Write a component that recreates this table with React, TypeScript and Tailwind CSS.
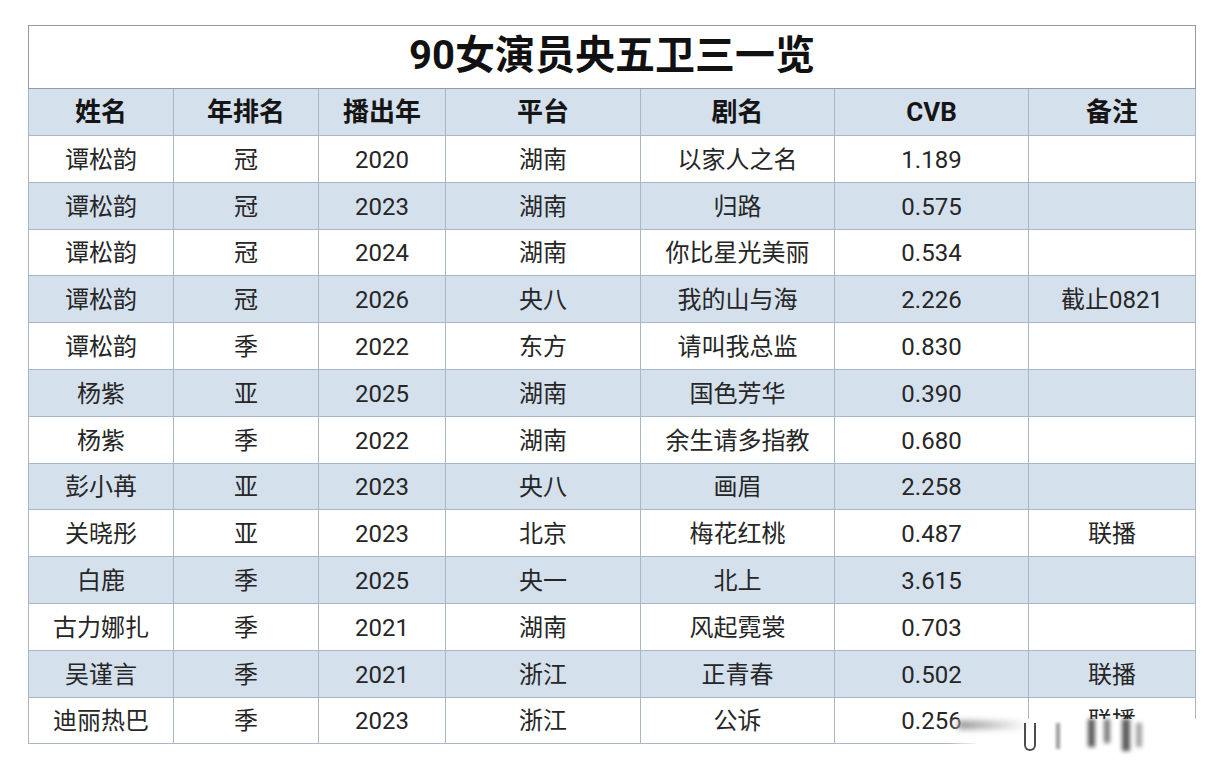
import React from "react"

type Row = [string, string, string, string, string, string, string]

const rows: Row[] = [
    ["谭松韵", "冠", "2020", "湖南", "以家人之名", "1.189", ""],
    ["谭松韵", "冠", "2023", "湖南", "归路", "0.575", ""],
    ["谭松韵", "冠", "2024", "湖南", "你比星光美丽", "0.534", ""],
    ["谭松韵", "冠", "2026", "央八", "我的山与海", "2.226", "截止0821"],
    ["谭松韵", "季", "2022", "东方", "请叫我总监", "0.830", ""],
    ["杨紫", "亚", "2025", "湖南", "国色芳华", "0.390", ""],
    ["杨紫", "季", "2022", "湖南", "余生请多指教", "0.680", ""],
    ["彭小苒", "亚", "2023", "央八", "画眉", "2.258", ""],
    ["关晓彤", "亚", "2023", "北京", "梅花红桃", "0.487", "联播"],
    ["白鹿", "季", "2025", "央一", "北上", "3.615", ""],
    ["古力娜扎", "季", "2021", "湖南", "风起霓裳", "0.703", ""],
    ["吴谨言", "季", "2021", "浙江", "正青春", "0.502", "联播"],
    ["迪丽热巴", "季", "2023", "浙江", "公诉", "0.256", "联播"],
]

const headers = ["姓名", "年排名", "播出年", "平台", "剧名", "CVB", "备注"]
const widths = ["w-[145px]", "w-[145px]", "w-[127px]", "w-[195px]", "w-[194px]", "w-[194px]", "w-[167px]"]

const App = (): React.ReactElement => {
    return (
        <div className="relative w-[1224px] h-[774px] bg-white pt-[25px] pl-[28px] font-['Roboto','Noto_Sans_CJK_SC',sans-serif]">
            <table className="w-[1167px] table-fixed border-collapse border border-[#8f9baa] text-center">
                <colgroup>
                    {widths.map((w, i) => (
                        <col key={i} className={w} />
                    ))}
                </colgroup>
                <tbody>
                    <tr className="h-[63px]">
                        <td colSpan={7} className="border border-[#8f9baa] bg-white text-[40px] font-bold text-[#111] leading-none pb-[2px]">
                            90女演员央五卫三一览
                        </td>
                    </tr>
                    <tr className="h-[47px] bg-[#d5e0ed]">
                        {headers.map((h) => (
                            <td key={h} className="border border-[#a9b6c6] text-[26px] font-bold text-[#151515] leading-none">
                                {h}
                            </td>
                        ))}
                    </tr>
                    {rows.map((r, i) => (
                        <tr key={i} className={i % 2 === 0 ? "h-[46.8px] bg-white" : "h-[46.8px] bg-[#d5e0ed]"}>
                            {r.map((c, j) => (
                                <td key={j} className="border border-[#a9b6c6] text-[24px] text-[#262626] leading-none pt-[2px]">
                                    {c}
                                </td>
                            ))}
                        </tr>
                    ))}
                </tbody>
            </table>

            {/* watermark smear lying over the last row */}
            <div className="absolute left-[948px] top-[719px] w-[262px] h-[34px] flex items-start bg-gradient-to-r from-transparent via-white via-[12%] to-white">
                <div className="mt-[2px] ml-[10px] w-[70px] h-[8px] bg-gradient-to-r from-[#555] to-transparent blur-[3px] opacity-70" />
                <div className="mt-[4px] ml-[-4px] w-[12px] h-[28px] border-2 border-t-0 border-[#222] rounded-b-md opacity-80" />
                <div className="mt-[4px] ml-[20px] w-[4px] h-[26px] bg-[#999] blur-[1.5px]" />
                <div className="ml-[28px] w-[7px] h-[28px] bg-[#333] blur-[2px] opacity-80" />
                <div className="ml-[9px] w-[6px] h-[24px] bg-[#444] blur-[2px] opacity-70" />
                <div className="ml-[12px] w-[8px] h-[32px] bg-[#333] blur-[2px] opacity-80" />
                <div className="mt-[4px] ml-[6px] w-[6px] h-[24px] bg-[#666] blur-[2px] opacity-60" />
            </div>
        </div>
    )
}

export default App
